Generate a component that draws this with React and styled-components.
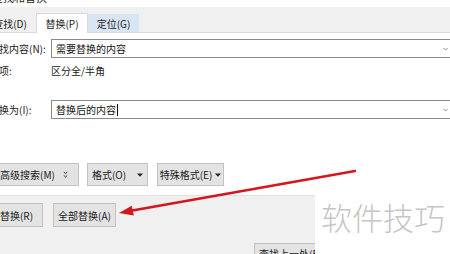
import React from "react";
import styled, { createGlobalStyle } from "styled-components";

const GlobalStyle = createGlobalStyle`
  html, body {
    margin: 0;
    padding: 0;
    background: #ffffff;
  }
  body {
    font-family: "Noto Sans CJK SC", "Noto Sans", sans-serif;
    font-size: 10px;
    color: #1a1a1a;
  }
`;

const Page = styled.div`
  position: relative;
  width: 450px;
  height: 254px;
  overflow: hidden;
  background: #ffffff;
`;

const Dialog = styled.div`
  margin-left: -16px;
  width: 470px;
  display: flex;
  flex-direction: column;
`;

const TitleBar = styled.div`
  height: 7px;
  overflow: hidden;
  background: #ffffff;
  padding-left: 8px;

  span {
    display: block;
    margin-top: -10px;
    font-size: 11px;
    line-height: 14px;
    color: #222;
  }
`;

const TabBar = styled.div`
  height: 25px;
  background: #f0f0f0;
  border-bottom: 1px solid #dadada;
  display: flex;
  align-items: flex-end;
`;

const Tab = styled.div`
  width: ${({ $w }) => $w}px;
  height: ${({ $active }) => ($active ? 20 : 18)}px;
  box-sizing: border-box;
  display: flex;
  align-items: center;
  justify-content: center;
  margin-bottom: ${({ $active }) => ($active ? -1 : 0)}px;
  background: ${({ $active, $hover }) =>
    $active ? "#ffffff" : $hover ? "#d8e6f3" : "#f0f0f0"};
  border: ${({ $active }) => ($active ? "1px solid #dadada" : "none")};
  border-bottom: none;
  padding-top: ${({ $active }) => ($active ? 0 : 1)}px;
  color: #1a1a1a;
  font-size: 10px;
`;

const FormPanel = styled.div`
  background: #ffffff;
  padding: 6px 0 9px 5px;
  display: flex;
  flex-direction: column;
`;

const Row = styled.div`
  display: flex;
  align-items: center;
  margin-top: ${({ $mt }) => $mt || 0}px;
  height: ${({ $h }) => $h}px;
`;

const Label = styled.div`
  width: 62px;
  flex-shrink: 0;
  font-size: 10px;
  color: #1a1a1a;
`;

const Field = styled.div`
  flex: 1;
  height: 19px;
  box-sizing: border-box;
  border: 1px solid #8a8a8a;
  background: #ffffff;
  display: flex;
  align-items: center;
  padding: 0 2px 0 4px;
  font-size: 10px;
  color: #111;
`;

const FieldText = styled.span`
  flex: 1;
  display: flex;
  align-items: center;
`;

const Caret = styled.span`
  display: inline-block;
  width: 0;
  height: 12px;
  border-left: 1px solid #111;
  margin-left: 1px;
`;

const Chevron = () => (
  <svg width="5" height="4" viewBox="0 0 5 4" style={{ marginRight: 3 }}>
    <path d="M0.5 1 L2.5 3 L4.5 1" fill="none" stroke="#888" strokeWidth="1" />
  </svg>
);

const ButtonRow = styled.div`
  display: flex;
  margin-top: ${({ $mt }) => $mt || 0}px;
  padding-left: ${({ $pl }) => $pl || 0}px;
`;

const Button = styled.div`
  width: ${({ $w }) => $w}px;
  height: ${({ $h }) => $h || 24}px;
  box-sizing: border-box;
  margin-left: ${({ $ml }) => $ml || 0}px;
  background: #e3e3e3;
  border: 1px solid #c2c2c2;
  display: flex;
  align-items: ${({ $top }) => ($top ? "flex-start" : "center")};
  justify-content: ${({ $start }) => ($start ? "flex-start" : "center")};
  padding-left: ${({ $start }) => ($start ? 4 : 0)}px;
  padding-top: ${({ $top }) => ($top ? 2 : 0)}px;
  gap: ${({ $gap }) => $gap || 0}px;
  font-size: 10px;
  color: #1a1a1a;
  white-space: nowrap;
  overflow: hidden;
`;

const DropArrow = () => (
  <svg width="6" height="4" viewBox="0 0 6 4">
    <path d="M0 0.5 L6 0.5 L3 3.8 Z" fill="#222" />
  </svg>
);

const MoreArrow = () => (
  <svg width="5" height="8" viewBox="0 0 5 8">
    <path d="M0.8 1 L2.5 2.6 L4.2 1 M0.8 4.4 L2.5 6 L4.2 4.4" fill="none" stroke="#333" strokeWidth="1" />
  </svg>
);

const LowerArea = styled.div`
  background: #f0f0f0;
  border-top: 1px solid #e2e2e2;
  padding: 7px 0 0 4px;
  height: 80px;
`;

const Watermark = styled.div`
  position: absolute;
  left: 315px;
  top: 195px;
  width: 135px;
  height: 59px;
  background: #ffffff;
  display: flex;
  padding: 3px 0 0 6px;
  box-sizing: border-box;
  font-size: 31px;
  line-height: 38px;
  color: #c6c6c6;
  font-weight: 300;
`;

const ArrowOverlay = styled.svg`
  position: absolute;
  left: 0;
  top: 0;
  pointer-events: none;
`;

export default function App() {
  return (
    <>
      <GlobalStyle />
      <Page>
        <Dialog>
          <TitleBar>
            <span>查找和替换</span>
          </TitleBar>
          <TabBar>
            <Tab $w={52}>查找(D)</Tab>
            <Tab $w={52} $active>
              替换(P)
            </Tab>
            <Tab $w={51} $hover>
              定位(G)
            </Tab>
          </TabBar>
          <FormPanel>
            <Row $h={19}>
              <Label>查找内容(N):</Label>
              <Field>
                <FieldText>需要替换的内容</FieldText>
                <Chevron />
              </Field>
            </Row>
            <Row $h={14} $mt={5}>
              <Label>选项:</Label>
              <span>区分全/半角</span>
            </Row>
            <Row $h={19} $mt={23}>
              <Label>替换为(I):</Label>
              <Field>
                <FieldText>
                  替换后的内容
                  <Caret />
                </FieldText>
                <Chevron />
              </Field>
            </Row>
            <ButtonRow $mt={44}>
              <Button $w={90} $h={23} $gap={8}>
                <span style={{ marginLeft: 0 }}>高级搜索(M)</span>
                <MoreArrow />
              </Button>
              <Button $w={61} $h={23} $ml={8} $gap={11}>
                <span>格式(O)</span>
                <DropArrow />
              </Button>
              <Button $w={67} $h={23} $ml={9} $gap={3}>
                <span>特殊格式(E)</span>
                <DropArrow />
              </Button>
            </ButtonRow>
          </FormPanel>
          <LowerArea>
            <ButtonRow>
              <Button $w={55}>
                <span style={{ marginLeft: 2 }}>替换(R)</span>
              </Button>
              <Button $w={63} $ml={10}>
                全部替换(A)
              </Button>
            </ButtonRow>
            <ButtonRow $mt={16}>
              <Button $w={90} $ml={266} $start $top>
                查找上一处(B)
              </Button>
            </ButtonRow>
          </LowerArea>
        </Dialog>
        <ArrowOverlay width="450" height="254" viewBox="0 0 450 254">
          <line x1="355" y1="171" x2="131" y2="210.8" stroke="#d4161e" strokeWidth="2.4" strokeLinecap="round" />
          <path d="M119 213 L133.8 215.4 L131.8 205.8 Z" fill="#d4161e" />
        </ArrowOverlay>
        <Watermark>软件技巧</Watermark>
      </Page>
    </>
  );
}
